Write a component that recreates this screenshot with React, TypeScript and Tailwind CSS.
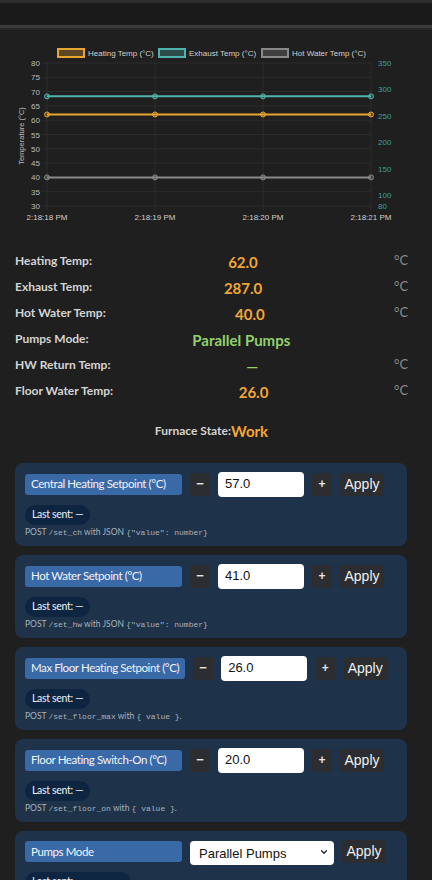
import { ChevronDown } from "lucide-react";

const PLOT = { left: 47, right: 371, top: 63, bottom: 206 };
const xs = [47, 155, 263, 371];
const times = ["2:18:18 PM", "2:18:19 PM", "2:18:20 PM", "2:18:21 PM"];
const leftTicks = [80, 75, 70, 65, 60, 55, 50, 45, 40, 35, 30];
const rightTicks = [350, 300, 250, 200, 150, 100, 80];

const leftY = (v: number) => PLOT.top + ((80 - v) * (PLOT.bottom - PLOT.top)) / 50;
const rightY = (v: number) => PLOT.top + ((350 - v) * (PLOT.bottom - PLOT.top)) / 270;

const series = [
  { label: "Heating Temp (°C)", color: "#e9a532", fill: "rgba(233,165,50,0.3)", y: leftY(62), legendX: 57 },
  { label: "Exhaust Temp (°C)", color: "#4fb3ad", fill: "rgba(79,179,173,0.3)", y: rightY(287), legendX: 158 },
  { label: "Hot Water Temp (°C)", color: "#8a8a8a", fill: "rgba(138,138,138,0.3)", y: leftY(40), legendX: 261 },
];

function TempChart() {
  return (
    <svg width="432" height="200" viewBox="0 30 432 200" className="block" style={{ fontFamily: "'Liberation Sans', Arial, sans-serif" }}>
      {/* legend */}
      {series.map((s) => (
        <g key={s.label}>
          <rect x={s.legendX + 1} y={49} width={26} height={8} fill={s.fill} stroke={s.color} strokeWidth={2} />
          <text x={s.legendX + 31} y={56} fontSize={8} fill="#cfcfcf">{s.label}</text>
        </g>
      ))}

      {/* grid */}
      {leftTicks.map((t) => (
        <line key={t} x1={PLOT.left - 4} x2={PLOT.right} y1={leftY(t)} y2={leftY(t)} stroke="#2c2c2c" strokeWidth={1} />
      ))}
      {xs.map((x) => (
        <line key={x} x1={x} x2={x} y1={PLOT.top} y2={PLOT.bottom + 4} stroke="#2c2c2c" strokeWidth={1} />
      ))}

      {/* left axis */}
      {leftTicks.map((t) => (
        <text key={t} x={40} y={leftY(t) + 3} fontSize={8} fill="#bdbdbd" textAnchor="end">{t}</text>
      ))}
      <text x={0} y={0} fontSize={7.5} fill="#bdbdbd" textAnchor="middle" transform="translate(24 136) rotate(-90)">
        Temperature (°C)
      </text>

      {/* right axis */}
      {rightTicks.map((t) => (
        <text key={t} x={378} y={rightY(t) + 3} fontSize={8} fill="#3e9f9a">{t}</text>
      ))}

      {/* x labels */}
      {xs.map((x, i) => (
        <text key={x} x={x} y={220} fontSize={8} fill="#cfcfcf" textAnchor="middle">{times[i]}</text>
      ))}

      {/* data */}
      {series.map((s) => (
        <g key={s.label}>
          <line x1={xs[0]} x2={xs[3]} y1={s.y} y2={s.y} stroke={s.color} strokeWidth={2} />
          {xs.map((x) => (
            <circle key={x} cx={x} cy={s.y} r={2.5} fill={s.fill} stroke={s.color} strokeWidth={1} />
          ))}
        </g>
      ))}
    </svg>
  );
}

type Reading = { label: string; value: string; unit?: string; tone: "orange" | "green" };

const readings: Reading[] = [
  { label: "Heating Temp:", value: "62.0", unit: "°C", tone: "orange" },
  { label: "Exhaust Temp:", value: "287.0", unit: "°C", tone: "orange" },
  { label: "Hot Water Temp:", value: "40.0", unit: "°C", tone: "orange" },
  { label: "Pumps Mode:", value: "Parallel Pumps", tone: "green" },
  { label: "HW Return Temp:", value: "—", unit: "°C", tone: "green" },
  { label: "Floor Water Temp:", value: "26.0", unit: "°C", tone: "orange" },
];

type Setpoint = { label: string; value: string; path: string; json: boolean };

const setpoints: Setpoint[] = [
  { label: "Central Heating Setpoint (°C)", value: "57.0", path: "/set_ch", json: true },
  { label: "Hot Water Setpoint (°C)", value: "41.0", path: "/set_hw", json: true },
  { label: "Max Floor Heating Setpoint (°C)", value: "26.0", path: "/set_floor_max", json: false },
  { label: "Floor Heating Switch-On (°C)", value: "20.0", path: "/set_floor_on", json: false },
];

const ui = "font-['Lato','Noto_Sans',sans-serif]";
const mono = "font-['Liberation_Mono','DejaVu_Sans_Mono',monospace]";
const arial = "font-['Liberation_Sans',Arial,sans-serif]";

// pill label on the left of each control row
const labelPill = `min-w-[157px] h-[21px] flex items-center px-[6px] rounded-[3px] bg-[#3a69a7] text-[11.5px] tracking-[-0.4px] text-[#f2f4f7] whitespace-nowrap ${ui}`;
const darkBtn = `h-[23px] flex items-center justify-center rounded-[3px] bg-[#2b2d30] text-[#e6e6e6] ${arial}`;
const lastSent = `mt-[8px] inline-flex items-center h-[20px] px-[7px] rounded-full bg-[#0e2542] text-[10.5px] tracking-[-0.3px] text-[#eef2f6] ${ui}`;
const card = "rounded-lg bg-[#1e3249] px-[10px] pt-[9px] pb-[7px]";

function PostNote({ path, json }: { path: string; json: boolean }) {
  return (
    <p className={`mt-[1px] text-[8.5px] leading-[13px] text-[#a9b2bc] ${ui}`}>
      POST <code className={`${mono} text-[8px]`}>{path}</code> with{" "}
      {json ? (
        <>
          JSON <code className={`${mono} text-[8px]`}>{'{"value": number}'}</code>
        </>
      ) : (
        <>
          <code className={`${mono} text-[8px]`}>{"{ value }"}</code>.
        </>
      )}
    </p>
  );
}

function SetpointCard({ sp }: { sp: Setpoint }) {
  return (
    <div className={card}>
      <div className="flex items-center gap-2">
        <div className={labelPill}>{sp.label}</div>
        <button className={`${darkBtn} w-[20px] text-[13px] font-bold`}>−</button>
        <div className={`w-[86px] h-[25px] flex items-center px-[7px] rounded-[4px] bg-white text-[13px] text-[#111] ${arial}`}>{sp.value}</div>
        <button className={`${darkBtn} w-[20px] text-[12px] font-bold`}>+</button>
        <button className={`${darkBtn} w-[44px] text-[14px] text-[#f0f0f0]`}>Apply</button>
      </div>
      <div className={lastSent}>Last sent: —</div>
      <PostNote path={sp.path} json={sp.json} />
    </div>
  );
}

export default function App() {
  return (
    <div className="min-h-screen bg-[#1f1f1f]">
      <div className="h-[3px] bg-[#2d2d2d]" />
      <div className="h-[22px] bg-[#1a1a1a]" />
      <div className="h-[3px] bg-[#3b3b3b]" />
      <div className="h-[2px] bg-[#282828]" />

      <TempChart />

      <div className={`mt-[18px] pl-[15px] pr-[24px] ${ui}`}>
        {readings.map((r) => (
          <div key={r.label} className="flex items-center h-[26px]">
            <span className="text-[12px] font-bold text-[#d4d4d4]">{r.label}</span>
            <span
              className={`flex-1 text-center text-[15px] font-bold pt-[3px] ${r.tone === "orange" ? "text-[#f2a636]" : "text-[#92d06d]"}`}
            >
              {r.value}
            </span>
            <span className="w-[14px] text-[13px] text-[#8c8c8c]">{r.unit ?? ""}</span>
          </div>
        ))}

        <div className="mt-[14px] flex items-baseline justify-center">
          <span className="text-[12px] font-bold text-[#d4d4d4]">Furnace State:</span>
          <span className="text-[15px] font-bold text-[#f2a636] translate-y-[2px]">Work</span>
        </div>
      </div>

      <div className="mt-[22px] ml-[15px] mr-[25px] flex flex-col gap-[9px] pb-6">
        {setpoints.map((sp) => (
          <SetpointCard key={sp.path} sp={sp} />
        ))}

        <div className={card}>
          <div className="flex items-center gap-2">
            <div className={labelPill}>Pumps Mode</div>
            <div className="relative w-[144px] h-[24px]">
              <select
                defaultValue="parallel"
                className={`w-full h-full appearance-none rounded-[4px] bg-white pl-[9px] text-[13px] text-[#111] ${arial}`}
              >
                <option value="parallel">Parallel Pumps</option>
                <option value="priority">HW Priority</option>
              </select>
              <ChevronDown size={10} strokeWidth={3} className="absolute right-[5px] top-[7px] text-[#222] pointer-events-none" />
            </div>
            <button className={`${darkBtn} w-[44px] text-[14px] text-[#f0f0f0]`}>Apply</button>
          </div>
          <div className={`${lastSent} w-[106px]`}>Last sent: —</div>
          <PostNote path="/set_pumps" json={false} />
        </div>
      </div>
    </div>
  );
}
